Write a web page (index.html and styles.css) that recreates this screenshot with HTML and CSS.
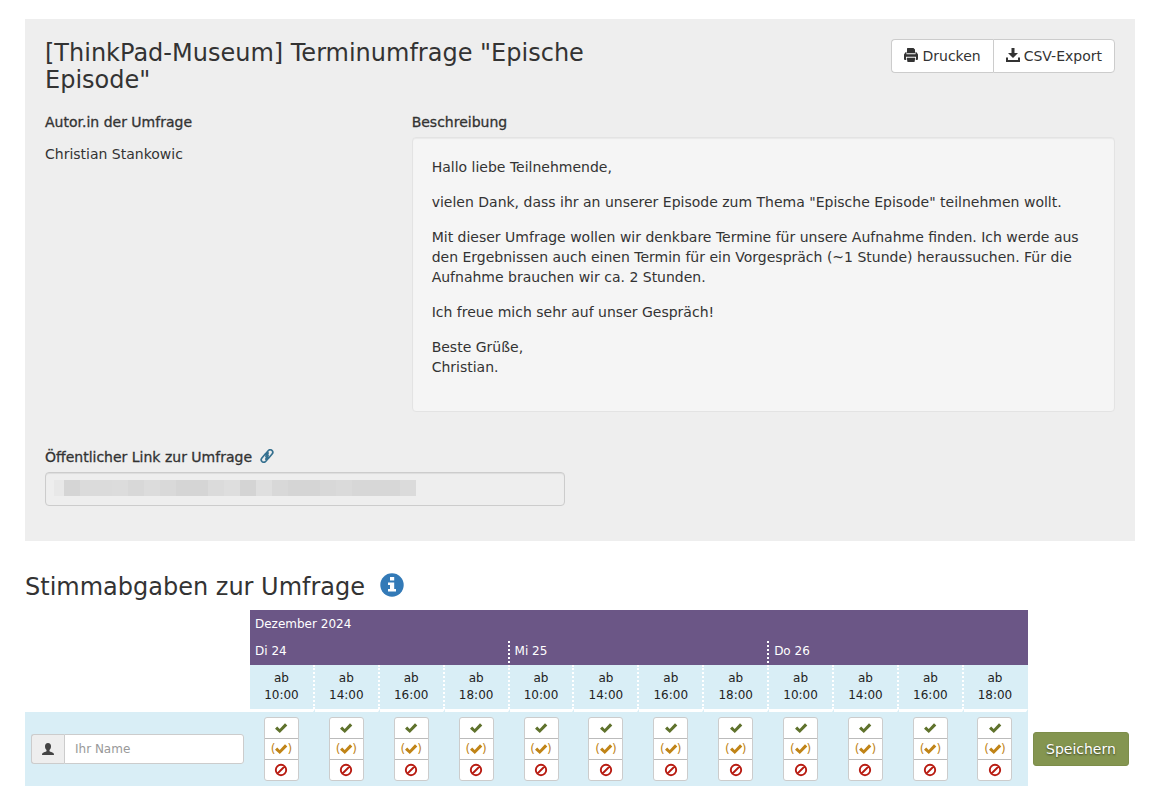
FILE: index.html
```html
<!DOCTYPE html>
<html lang="de">
<head>
<meta charset="utf-8">
<meta name="viewport" content="width=device-width, initial-scale=1">
<title>Terminumfrage "Epische Episode"</title>
<link rel="stylesheet" href="styles.css">
</head>
<body>
<svg class="sprite" aria-hidden="true">
  <symbol id="i-print" viewBox="0 0 14 14"><path d="M3.500 0h6l1.500 1.500V5.300H3V.5zM1.300 4.500l1.200-.8v2.600h9V3.700l1.200.8L14 6.500V11q0 1-1 1h-1V8.800H2V12H1q-1 0-1-1V6.500zM3 9.800h8l.5 1.700H11l-.5 2.500h-7L3 11.500h-.5z"/></symbol>
  <symbol id="i-save" viewBox="0 0 14 14"><path d="M5.500 0h3v5H12L7 10 2 5h3.500zM0 9.500h2V12h10V9.500h2V14H0z"/></symbol>
  <symbol id="i-user" viewBox="0 0 14 14"><path d="M7 1c2 0 3 1.300 3 3.200 0 1.800-.6 2.900-1.500 3.900v1.100c1 .6 2.600 1 3.800 1.700.5.300.7 1 .7 2.100H1c0-1.100.2-1.800.7-2.100 1.200-.7 2.800-1.100 3.800-1.700V8.100C4.600 7.100 4 6 4 4.200 4 2.300 5 1 7 1z"/></symbol>
  <symbol id="i-ok" viewBox="0 0 14 14"><path d="M1 7.700l2.200-2.200 2.500 2.400L11 2.300l2.300 2.200-7.500 7.500z"/></symbol>
  <symbol id="i-ban" viewBox="0 0 14 14"><path fill="none" stroke="currentColor" stroke-width="1.900" d="M7 1.800a5.200 5.200 0 1 0 0 10.400A5.200 5.200 0 0 0 7 1.800zM3.500 10.500l7-7"/></symbol>
  <symbol id="i-link" viewBox="0 0 14 14"><g fill="none" stroke="currentColor" stroke-width="1.700" stroke-linecap="round"><path d="M5.200 5.200l3-3.500c1-1.100 2.600-1.100 3.700-.3 1.100 1 1.200 2.400.2 3.600L9.600 8C8.600 9 7.400 9.100 6.500 8.300c-.7-.7-.7-1.500 0-2.300l1.700-2"/><path d="M8.800 8.800l-3 3.500c-1 1.100-2.600 1.100-3.700.3-1.100-1-1.200-2.400-.2-3.600L4.400 6c1-1 2.200-1.100 3.100-.3.700.7.700 1.500 0 2.300l-1.700 2"/></g></symbol>
  <symbol id="i-info" viewBox="0 0 24 24"><circle cx="12" cy="12" r="11.700"/><path fill="#fff" d="M10 4h4.200v3.500H10zM8 9.500h6.200V16H16v2.500H8V16h2v-4H8z"/></symbol>
</svg>

<main class="page">
  <section class="panel">
    <header class="panel-head">
      <h1 class="title">[ThinkPad-Museum] Terminumfrage "Epische Episode"</h1>
      <div class="btn-group">
        <button class="btn" type="button"><svg class="icon"><use href="#i-print"/></svg> Drucken</button>
        <button class="btn" type="button"><svg class="icon"><use href="#i-save"/></svg> CSV-Export</button>
      </div>
    </header>

    <div class="details">
      <div class="author">
        <h2 class="label">Autor.in der Umfrage</h2>
        <p class="author-name">Christian Stankowic</p>
      </div>
      <div class="description">
        <h2 class="label">Beschreibung</h2>
        <div class="well">
          <p>Hallo liebe Teilnehmende,</p>
          <p>vielen Dank, dass ihr an unserer Episode zum Thema "Epische Episode" teilnehmen wollt.</p>
          <p>Mit dieser Umfrage wollen wir denkbare Termine für unsere Aufnahme finden. Ich werde aus den Ergebnissen auch einen Termin für ein Vorgespräch (~1 Stunde) heraussuchen. Für die Aufnahme brauchen wir ca. 2 Stunden.</p>
          <p>Ich freue mich sehr auf unser Gespräch!</p>
          <p>Beste Grüße,<br>Christian.</p>
        </div>
      </div>
    </div>

    <div class="public-link">
      <label class="label" for="public-link">Öffentlicher Link zur Umfrage <a class="link" href="#" aria-label="Link"><svg class="icon"><use href="#i-link"/></svg></a></label>
      <input class="link-field" id="public-link" type="text" readonly>
    </div>
  </section>

  <h2 class="section-title">Stimmabgaben zur Umfrage <a class="info" href="#" aria-label="Information"><svg class="icon-info"><use href="#i-info"/></svg></a></h2>

  <form>
  <table class="poll">
    <colgroup><col class="col-name"><col span="11"><col class="col-last"><col class="col-save"></colgroup>
    <thead>
      <tr class="month"><td></td><th colspan="12" scope="colgroup">Dezember 2024</th><td></td></tr>
      <tr class="day"><td></td><th colspan="4" scope="colgroup"><div>Di 24</div></th><th colspan="4" scope="colgroup"><div>Mi 25</div></th><th colspan="4" scope="colgroup"><div>Do 26</div></th><td></td></tr>
      <tr class="time"><td></td><th>ab 10:00</th><th>ab 14:00</th><th>ab 16:00</th><th>ab 18:00</th><th>ab 10:00</th><th>ab 14:00</th><th>ab 16:00</th><th>ab 18:00</th><th>ab 10:00</th><th>ab 14:00</th><th>ab 16:00</th><th>ab 18:00</th><td></td></tr>
    </thead>
    <tbody>
      <tr class="vote">
        <th scope="row"><div class="name-group"><label class="addon" for="name" aria-label="Ihr Name"><svg class="icon"><use href="#i-user"/></svg></label><input class="name" id="name" type="text" placeholder="Ihr Name"></div></th>
        <td><div class="choices">
          <label class="choice yes"><input type="radio" name="c1" aria-label="Ja"><svg class="icon"><use href="#i-ok"/></svg></label>
          <label class="choice maybe"><input type="radio" name="c1" aria-label="Vielleicht">(<svg class="icon"><use href="#i-ok"/></svg>)</label>
          <label class="choice no"><input type="radio" name="c1" aria-label="Nein"><svg class="icon"><use href="#i-ban"/></svg></label>
        </div></td>
        <td><div class="choices">
          <label class="choice yes"><input type="radio" name="c2" aria-label="Ja"><svg class="icon"><use href="#i-ok"/></svg></label>
          <label class="choice maybe"><input type="radio" name="c2" aria-label="Vielleicht">(<svg class="icon"><use href="#i-ok"/></svg>)</label>
          <label class="choice no"><input type="radio" name="c2" aria-label="Nein"><svg class="icon"><use href="#i-ban"/></svg></label>
        </div></td>
        <td><div class="choices">
          <label class="choice yes"><input type="radio" name="c3" aria-label="Ja"><svg class="icon"><use href="#i-ok"/></svg></label>
          <label class="choice maybe"><input type="radio" name="c3" aria-label="Vielleicht">(<svg class="icon"><use href="#i-ok"/></svg>)</label>
          <label class="choice no"><input type="radio" name="c3" aria-label="Nein"><svg class="icon"><use href="#i-ban"/></svg></label>
        </div></td>
        <td><div class="choices">
          <label class="choice yes"><input type="radio" name="c4" aria-label="Ja"><svg class="icon"><use href="#i-ok"/></svg></label>
          <label class="choice maybe"><input type="radio" name="c4" aria-label="Vielleicht">(<svg class="icon"><use href="#i-ok"/></svg>)</label>
          <label class="choice no"><input type="radio" name="c4" aria-label="Nein"><svg class="icon"><use href="#i-ban"/></svg></label>
        </div></td>
        <td><div class="choices">
          <label class="choice yes"><input type="radio" name="c5" aria-label="Ja"><svg class="icon"><use href="#i-ok"/></svg></label>
          <label class="choice maybe"><input type="radio" name="c5" aria-label="Vielleicht">(<svg class="icon"><use href="#i-ok"/></svg>)</label>
          <label class="choice no"><input type="radio" name="c5" aria-label="Nein"><svg class="icon"><use href="#i-ban"/></svg></label>
        </div></td>
        <td><div class="choices">
          <label class="choice yes"><input type="radio" name="c6" aria-label="Ja"><svg class="icon"><use href="#i-ok"/></svg></label>
          <label class="choice maybe"><input type="radio" name="c6" aria-label="Vielleicht">(<svg class="icon"><use href="#i-ok"/></svg>)</label>
          <label class="choice no"><input type="radio" name="c6" aria-label="Nein"><svg class="icon"><use href="#i-ban"/></svg></label>
        </div></td>
        <td><div class="choices">
          <label class="choice yes"><input type="radio" name="c7" aria-label="Ja"><svg class="icon"><use href="#i-ok"/></svg></label>
          <label class="choice maybe"><input type="radio" name="c7" aria-label="Vielleicht">(<svg class="icon"><use href="#i-ok"/></svg>)</label>
          <label class="choice no"><input type="radio" name="c7" aria-label="Nein"><svg class="icon"><use href="#i-ban"/></svg></label>
        </div></td>
        <td><div class="choices">
          <label class="choice yes"><input type="radio" name="c8" aria-label="Ja"><svg class="icon"><use href="#i-ok"/></svg></label>
          <label class="choice maybe"><input type="radio" name="c8" aria-label="Vielleicht">(<svg class="icon"><use href="#i-ok"/></svg>)</label>
          <label class="choice no"><input type="radio" name="c8" aria-label="Nein"><svg class="icon"><use href="#i-ban"/></svg></label>
        </div></td>
        <td><div class="choices">
          <label class="choice yes"><input type="radio" name="c9" aria-label="Ja"><svg class="icon"><use href="#i-ok"/></svg></label>
          <label class="choice maybe"><input type="radio" name="c9" aria-label="Vielleicht">(<svg class="icon"><use href="#i-ok"/></svg>)</label>
          <label class="choice no"><input type="radio" name="c9" aria-label="Nein"><svg class="icon"><use href="#i-ban"/></svg></label>
        </div></td>
        <td><div class="choices">
          <label class="choice yes"><input type="radio" name="c10" aria-label="Ja"><svg class="icon"><use href="#i-ok"/></svg></label>
          <label class="choice maybe"><input type="radio" name="c10" aria-label="Vielleicht">(<svg class="icon"><use href="#i-ok"/></svg>)</label>
          <label class="choice no"><input type="radio" name="c10" aria-label="Nein"><svg class="icon"><use href="#i-ban"/></svg></label>
        </div></td>
        <td><div class="choices">
          <label class="choice yes"><input type="radio" name="c11" aria-label="Ja"><svg class="icon"><use href="#i-ok"/></svg></label>
          <label class="choice maybe"><input type="radio" name="c11" aria-label="Vielleicht">(<svg class="icon"><use href="#i-ok"/></svg>)</label>
          <label class="choice no"><input type="radio" name="c11" aria-label="Nein"><svg class="icon"><use href="#i-ban"/></svg></label>
        </div></td>
        <td><div class="choices">
          <label class="choice yes"><input type="radio" name="c12" aria-label="Ja"><svg class="icon"><use href="#i-ok"/></svg></label>
          <label class="choice maybe"><input type="radio" name="c12" aria-label="Vielleicht">(<svg class="icon"><use href="#i-ok"/></svg>)</label>
          <label class="choice no"><input type="radio" name="c12" aria-label="Nein"><svg class="icon"><use href="#i-ban"/></svg></label>
        </div></td>
        <td class="save-cell"><button class="save" type="submit">Speichern</button></td>
      </tr>
    </tbody>
  </table>
  </form>
</main>
</body>
</html>
```
FILE: styles.css
```css
* { box-sizing: border-box; }

body {
  margin: 0;
  background: #fff;
  color: #333;
  font: 14px/20px "DejaVu Sans", sans-serif;
}

svg { fill: currentColor; flex: none; }
.sprite { display: none; }
.icon { width: 14px; height: 14px; }

.page { padding: 19px 21px 16px 25px; }

.panel {
  padding: 20px 20px 35px;
  background: #eee;
}

.panel-head {
  display: flex;
  justify-content: space-between;
  align-items: flex-start;
}

.title,
.section-title {
  margin: 0;
  font-size: 24px;
  line-height: 27px;
  font-weight: 400;
}

.title {
  width: 56%;
  padding-top: 1px;
}

.btn-group { display: flex; }

.btn {
  display: flex;
  align-items: center;
  gap: 4px;
  height: 34px;
  padding: 0 12px;
  border: 1px solid #ccc;
  border-radius: 0 4px 4px 0;
  background: #fff;
  color: #333;
  font: inherit;
}

.btn svg { margin-bottom: 2px; }

.btn:first-child {
  border-right: 0;
  border-radius: 4px 0 0 4px;
}

.details {
  display: flex;
  gap: 30px;
  margin-top: 18px;
}

.author { flex: 0 0 calc((100% + 30px) / 3 - 30px); }
.description { flex: 1; }

.label {
  display: block;
  margin: 0 0 5px;
  color: #333;
  font-size: 14px;
  line-height: 20px;
  font-weight: 500;
  -webkit-text-stroke: 0.3px currentColor;
}

.author-name { margin: 12px 0 0; }

.well {
  padding: 19px;
  border: 1px solid #e3e3e3;
  border-radius: 4px;
  background: #f5f5f5;
  box-shadow: inset 0 1px 1px rgba(0, 0, 0, .05);
}

.well p { margin: 0 0 15px; }

.public-link {
  width: calc(50% - 15px);
  margin-top: 35px;
}

.link {
  display: inline-block;
  margin-left: 4px;
  color: #35708f;
}

.link svg { vertical-align: -1px; }

.link-field {
  display: block;
  width: 100%;
  height: 34px;
  border: 1px solid #ccc;
  border-radius: 4px;
  /* greyed-out address */
  background: linear-gradient(90deg,
    #e8e8e8 10px, #d5d5d5 10px 26px, #dbdbdb 26px 58px, #dcdcdc 58px 74px,
    #d8d8d8 74px 90px, #dcdcdc 90px 106px, #d9d9d9 106px 122px, #d5d5d5 122px 154px,
    #dbdbdb 154px 170px, #dedede 170px 186px, #d4d4d4 186px 202px, #dfdfdf 202px 218px,
    #d8d8d8 218px 234px, #d5d5d5 234px 266px, #d8d8d8 266px 282px, #dadada 282px 298px,
    #d7d7d7 298px 346px, #dbdbdb 346px) 8px 7px / 362px 16px no-repeat #eee;
  box-shadow: inset 0 1px 1px rgba(0, 0, 0, .075);
}

.section-title {
  display: flex;
  align-items: center;
  gap: 15px;
  margin: 32px 0 9px;
}

.info { display: flex; margin-bottom: 4px; color: #337ab7; }
.icon-info { width: 24px; height: 24px; }

.poll {
  width: 100%;
  table-layout: fixed;
  border-collapse: separate;
  border-spacing: 0;
  font-size: 12px;
  line-height: 17px;
}

.col-name { width: 225px; }
.col-last { width: 64px; }
.col-save { width: 107px; }

.poll th { font-weight: 400; }
.poll th, .poll td { padding: 0; }

.month th,
.day th {
  background: #6b5686;
  color: #fff;
  text-align: left;
}

.poll .month th { height: 28px; padding: 0 5px; }
.day th { height: 27px; }

.day div {
  height: 22px;
  padding: 2px 5px;
  border-right: 2px dotted #fff;
}

.day th:nth-child(4) div { border-right: 0; }

.poll .time th {
  height: 44px;
  padding: 5px 12px;
  border-right: 2px dotted #fff;
  background: #d9eef6;
  color: #222;
  text-align: center;
}

.poll .time th:nth-child(13) { border-right-color: transparent; }

.vote th,
.vote td {
  height: 77px;
  border-top: 3px solid #fff;
  background: #d9eef6;
}

.poll .vote th { padding: 0 6px; }

.name-group { display: flex; }

.addon {
  display: flex;
  align-items: center;
  justify-content: center;
  width: 33px;
  height: 30px;
  border: 1px solid #ccc;
  border-right: 0;
  border-radius: 3px 0 0 3px;
  background: #eee;
  color: #444;
}

.name {
  flex: 1;
  min-width: 0;
  height: 30px;
  padding: 0 10px;
  border: 1px solid #ccc;
  border-radius: 0 3px 3px 0;
  background: #fff;
  color: #555;
  font: inherit;
}

.name::placeholder { color: #999; }

.choices {
  width: 35px;
  margin: 0 auto;
  border: 1px solid #ccc;
  border-radius: 3px;
  background: #fff;
}

.vote td { border-right: 2px solid #d9eef6; }

.choice {
  display: flex;
  align-items: center;
  justify-content: center;
  height: 20px;
}

.choice + .choice {
  height: 21px;
  border-top: 1px solid #bbb;
}

.choice input {
  appearance: none;
  width: 0;
  height: 0;
  margin: 0;
}

.yes { color: #5f722c; }
.maybe { color: #c08417; }
.maybe svg { margin: 0 -1px; }
.no { color: #b81c12; }

.poll .save-cell {
  padding-left: 5px;
  border-right: 0;
  background: #fff;
}

.save {
  height: 34px;
  padding: 0 12px;
  border: 1px solid #7d8d4a;
  border-radius: 3px;
  background: #849550;
  color: #fff;
  font: 14px/20px "DejaVu Sans", sans-serif;
  text-shadow: 0 1px 2px rgba(0, 0, 0, .6);
}
```
